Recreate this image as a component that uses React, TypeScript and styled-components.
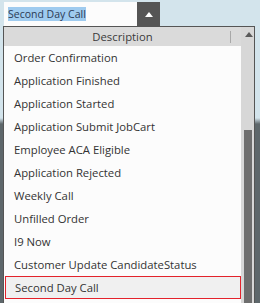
import styled, { createGlobalStyle } from "styled-components";

const GlobalStyle = createGlobalStyle`
  html, body {
    margin: 0;
    padding: 0;
    width: 260px;
    height: 303px;
    overflow: hidden;
    background: linear-gradient(to bottom, #d3e4ec 0px, #d3e4ec 118px, #5e676b 124px, #5e676b 100%);
    font-family: "Open Sans", "Noto Sans", sans-serif;
  }
`;

const Page = styled.div`
  padding: 2px 0 0 3px;
`;

const Combo = styled.div`
  display: flex;
  margin-left: 1px;
  height: 24px;
`;

const ComboInput = styled.div`
  width: 133px;
  background: #fcfcfc;
  display: flex;
  align-items: center;
  padding-left: 4px;
  box-sizing: border-box;
`;

const Selected = styled.span`
  background: #9fcbef;
  color: #2b3a55;
  font-size: 10.5px;
  line-height: 14px;
`;

const ComboButton = styled.div`
  width: 23px;
  background: #555555;
  display: flex;
  align-items: center;
  justify-content: center;
`;

const Panel = styled.div`
  width: 250px;
  border: 1px solid #555555;
  border-bottom: none;
  display: flex;
  background: #fcfcfc;
`;

const Main = styled.div`
  flex: 1;
  display: flex;
  flex-direction: column;
`;

const Header = styled.div`
  height: 19px;
  background: #dadada;
  display: flex;
  align-items: center;
  justify-content: center;
  position: relative;
  font-size: 11.3px;
  color: #3a3a3a;
`;

const HeaderDivider = styled.span`
  position: absolute;
  right: 10px;
  top: 4px;
  width: 1px;
  height: 12px;
  background: #a8a8a8;
`;

const List = styled.div`
  display: flex;
  flex-direction: column;
`;

const Row = styled.div<{ $selected?: boolean }>`
  height: 23px;
  box-sizing: border-box;
  display: flex;
  align-items: center;
  padding-left: ${(p) => (p.$selected ? "9px" : "10px")};
  margin-left: ${(p) => (p.$selected ? "1px" : "0")};
  font-size: 11.3px;
  color: #333333;
  background: ${(p) => (p.$selected ? "#f0f0f0" : "transparent")};
  border: ${(p) => (p.$selected ? "1px solid #e3222b" : "none")};
  white-space: nowrap;
`;

const ScrollBar = styled.div`
  width: 13px;
  background: #d7d7d7;
  display: flex;
  flex-direction: column;
  align-items: center;
`;

const ScrollArrow = styled.svg`
  margin-top: 5px;
  margin-left: 2px;
`;

const Thumb = styled.div`
  width: 8px;
  height: 200px;
  margin-top: 93px;
  background: #6e6e6e;
`;

const items = [
  "Order Confirmation",
  "Application Finished",
  "Application Started",
  "Application Submit JobCart",
  "Employee ACA Eligible",
  "Application Rejected",
  "Weekly Call",
  "Unfilled Order",
  "I9 Now",
  "Customer Update CandidateStatus",
  "Second Day Call",
];

export default function App() {
  return (
    <Page>
      <GlobalStyle />
      <Combo>
        <ComboInput>
          <Selected>Second Day Call</Selected>
        </ComboInput>
        <ComboButton>
          <svg width="8" height="5" viewBox="0 0 8 5">
            <path d="M0 5 L4 0 L8 5 Z" fill="#ffffff" />
          </svg>
        </ComboButton>
      </Combo>
      <Panel>
        <Main>
          <Header>
            Description
            <HeaderDivider />
          </Header>
          <List>
            {items.map((item, i) => (
              <Row key={i} $selected={item === "Second Day Call"}>
                {item}
              </Row>
            ))}
          </List>
        </Main>
        <ScrollBar>
          <ScrollArrow width="8" height="5" viewBox="0 0 8 5">
            <path d="M0 5 L4 0 L8 5 Z" fill="#5a5a5a" />
          </ScrollArrow>
          <Thumb />
        </ScrollBar>
      </Panel>
    </Page>
  );
}
